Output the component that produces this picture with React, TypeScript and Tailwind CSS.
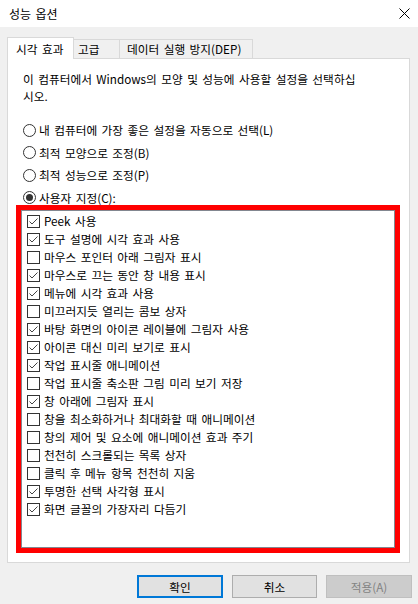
const options = [
  { label: "Peek 사용", checked: true },
  { label: "도구 설명에 시각 효과 사용", checked: true },
  { label: "마우스 포인터 아래 그림자 표시", checked: false },
  { label: "마우스로 끄는 동안 창 내용 표시", checked: true },
  { label: "메뉴에 시각 효과 사용", checked: true },
  { label: "미끄러지듯 열리는 콤보 상자", checked: false },
  { label: "바탕 화면의 아이콘 레이블에 그림자 사용", checked: true },
  { label: "아이콘 대신 미리 보기로 표시", checked: true },
  { label: "작업 표시줄 애니메이션", checked: true },
  { label: "작업 표시줄 축소판 그림 미리 보기 저장", checked: false },
  { label: "창 아래에 그림자 표시", checked: true },
  { label: "창을 최소화하거나 최대화할 때 애니메이션", checked: false },
  { label: "창의 제어 및 요소에 애니메이션 효과 주기", checked: false },
  { label: "천천히 스크롤되는 목록 상자", checked: false },
  { label: "클릭 후 메뉴 항목 천천히 지움", checked: false },
  { label: "투명한 선택 사각형 표시", checked: true },
  { label: "화면 글꼴의 가장자리 다듬기", checked: true },
];

const presets = [
  { label: "내 컴퓨터에 가장 좋은 설정을 자동으로 선택(L)", selected: false },
  { label: "최적 모양으로 조정(B)", selected: false },
  { label: "최적 성능으로 조정(P)", selected: false },
  { label: "사용자 지정(C):", selected: true },
];

const Radio = ({ selected }: { selected: boolean }) => (
  <span className="w-[13px] h-[13px] rounded-full border border-[#333333] bg-white flex items-center justify-center shrink-0">
    {selected && <span className="w-[7px] h-[7px] rounded-full bg-[#333333]" />}
  </span>
);

const CheckBox = ({ checked }: { checked: boolean }) => (
  <span className="w-[13px] h-[13px] border border-[#333333] bg-white flex items-center justify-center shrink-0">
    {checked && (
      <svg width="11" height="11" viewBox="0 0 11 11">
        <polyline
          points="1.5,5.5 4,8 9.5,2.5"
          fill="none"
          stroke="#444444"
          strokeWidth="1"
        />
      </svg>
    )}
  </span>
);

const App = () => {
  return (
    <div className="w-[418px] h-[604px] bg-[#f0f0f0] flex flex-col text-[11.7px] [word-spacing:1.8px] text-black font-['Noto_Sans_CJK_KR','Malgun_Gothic',sans-serif]">
      {/* title bar */}
      <div className="h-[27px] bg-white flex items-center justify-between pl-[9px] pr-[8px]">
        <span className="leading-none text-[12px]">성능 옵션</span>
        <svg width="11" height="11" viewBox="0 0 11 11">
          <line x1="0.5" y1="0.5" x2="10.5" y2="10.5" stroke="#000" strokeWidth="1" />
          <line x1="10.5" y1="0.5" x2="0.5" y2="10.5" stroke="#000" strokeWidth="1" />
        </svg>
      </div>

      {/* tabs */}
      <div className="pl-[7px] flex items-end h-[31px]">
        <div className="relative z-10 h-[22px] w-[67px] bg-white border border-[#d9d9d9] border-b-0 flex items-center pl-[8px] mb-[-1px]">
          <span className="leading-none">시각 효과</span>
        </div>
        <div className="h-[19px] w-[46px] border border-[#d9d9d9] border-l-0 border-b-0 flex items-center pl-[4px]">
          <span className="leading-none">고급</span>
        </div>
        <div className="h-[19px] w-[133px] border border-[#d9d9d9] border-l-0 border-b-0 flex items-center pl-[7px]">
          <span className="leading-none">데이터 실행 방지(DEP)</span>
        </div>
      </div>

      {/* panel */}
      <div className="ml-[7px] w-[403px] h-[505px] bg-white border border-[#d9d9d9] flex flex-col pl-[15px]">
        <p className="mt-[11px] leading-[17px]">
          이 컴퓨터에서 Windows의 모양 및 성능에 사용할 설정을 선택하십
          <br />
          시오.
        </p>

        <div className="mt-[15px] flex flex-col">
          {presets.map((p) => (
            <div key={p.label} className="h-[22.5px] flex items-center gap-[3px]">
              <Radio selected={p.selected} />
              <span className="leading-none">{p.label}</span>
            </div>
          ))}
        </div>

        <div className="ml-[-7px] mt-[-4px] w-[384px] h-[348px] border-[5px] border-[#ff0000]">
          <div className="h-full border border-[#828790] flex flex-col pt-[1px] pl-[5px]">
            {options.map((o) => (
              <div key={o.label} className="h-[18px] flex items-center gap-[4px]">
                <CheckBox checked={o.checked} />
                <span className="leading-none">{o.label}</span>
              </div>
            ))}
          </div>
        </div>
      </div>

      {/* buttons */}
      <div className="mt-[12px] flex justify-end gap-[9px] pr-[6px]">
        <button className="w-[86px] h-[23px] bg-[#e1e1e1] border-2 border-[#0078d7] flex items-center justify-center">
          <span className="leading-none">확인</span>
        </button>
        <button className="w-[85px] h-[23px] bg-[#e1e1e1] border border-[#adadad] flex items-center justify-center">
          <span className="leading-none">취소</span>
        </button>
        <button className="w-[86px] h-[23px] bg-[#cccccc] border border-[#bfbfbf] flex items-center justify-center text-[#838383]">
          <span className="leading-none">적용(A)</span>
        </button>
      </div>
    </div>
  );
};

export default App;
